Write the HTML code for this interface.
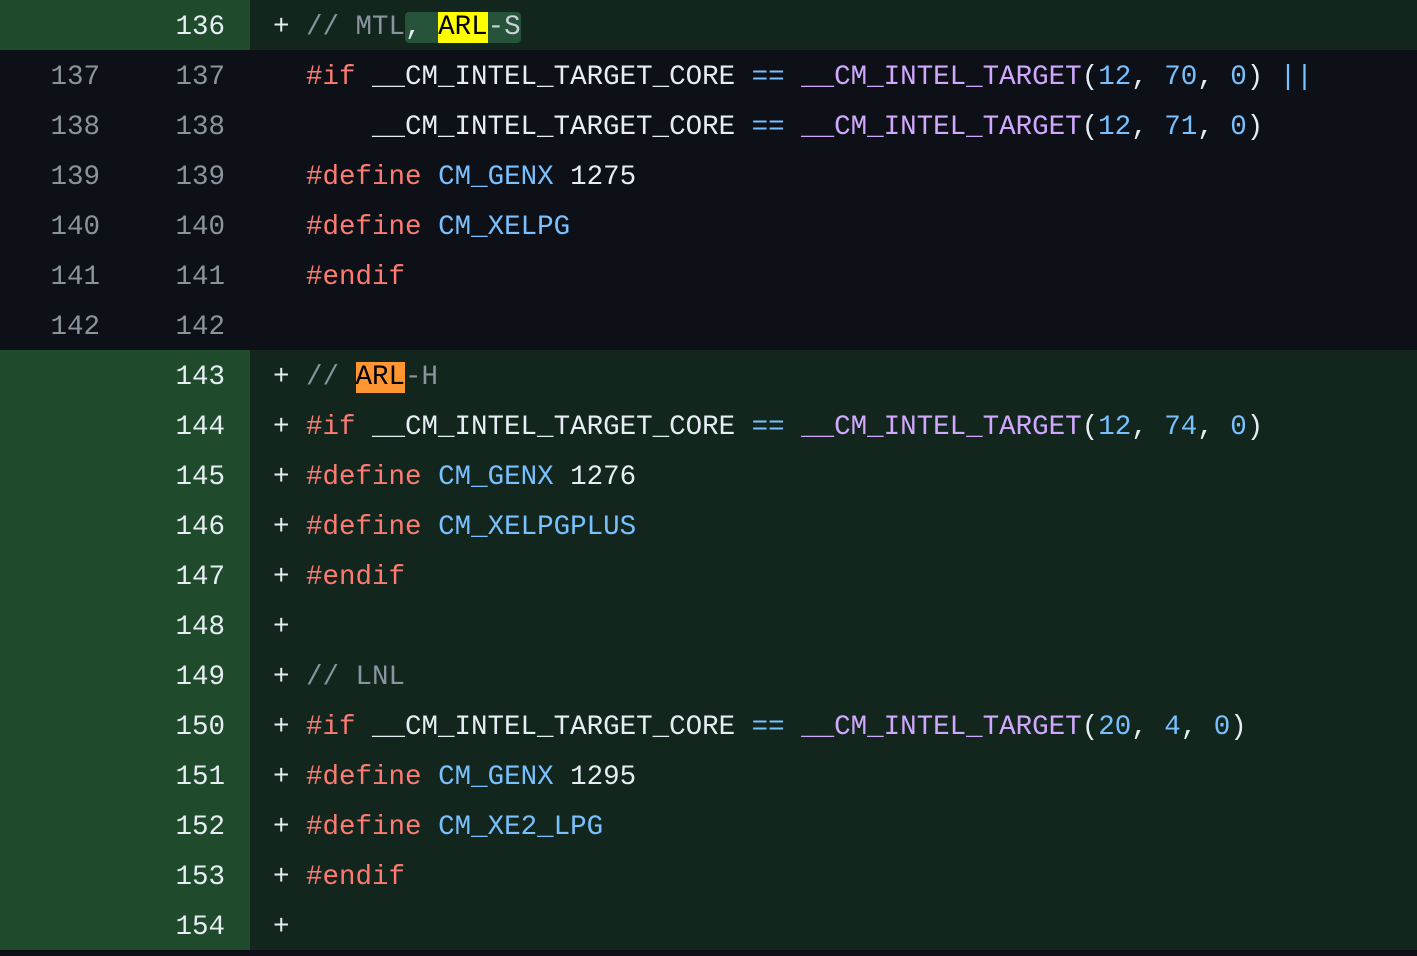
<!DOCTYPE html>
<html><head><style>
body{margin:0;width:1417px;height:949px;overflow:hidden;background:#0d1117;font-family:"Liberation Mono",monospace;font-size:27.5px;}
.r{height:50px;line-height:56px;position:relative;white-space:pre;}
.a{background:#12261e;}
.a .g{background:#1f4a2c;color:#e6edf3;}
.g{position:absolute;left:0;top:0;width:250px;height:50px;color:#8b949e;}
.n1{position:absolute;right:150px;}
.n2{position:absolute;right:25px;}
.c{position:absolute;left:273px;color:#e6edf3;}
.k{color:#ff7b72}.m{color:#8b949e}.b{color:#79c0ff}.p{color:#d2a8ff}
.hl{background:#26533a;border-radius:4px}
.y{background:#ffff00;color:#000}.o{background:#ff9632;color:#000}
</style></head><body>
<div class="r a"><div class="g"><span class="n2">136</span></div><span class="c">+ <span class="m">// MTL</span><span class="hl m"><span style="color:#e6edf3">, </span><span class="y">ARL</span><span style="color:#c9d1d9">-S</span></span></span></div>
<div class="r"><div class="g"><span class="n1">137</span><span class="n2">137</span></div><span class="c">  <span class="k">#if</span> __CM_INTEL_TARGET_CORE <span class="b">==</span> <span class="p">__CM_INTEL_TARGET</span>(<span class="b">12</span>, <span class="b">70</span>, <span class="b">0</span>) <span class="b">||</span></span></div>
<div class="r"><div class="g"><span class="n1">138</span><span class="n2">138</span></div><span class="c">      __CM_INTEL_TARGET_CORE <span class="b">==</span> <span class="p">__CM_INTEL_TARGET</span>(<span class="b">12</span>, <span class="b">71</span>, <span class="b">0</span>)</span></div>
<div class="r"><div class="g"><span class="n1">139</span><span class="n2">139</span></div><span class="c">  <span class="k">#define</span> <span class="b">CM_GENX</span> 1275</span></div>
<div class="r"><div class="g"><span class="n1">140</span><span class="n2">140</span></div><span class="c">  <span class="k">#define</span> <span class="b">CM_XELPG</span></span></div>
<div class="r"><div class="g"><span class="n1">141</span><span class="n2">141</span></div><span class="c">  <span class="k">#endif</span></span></div>
<div class="r"><div class="g"><span class="n1">142</span><span class="n2">142</span></div></div>
<div class="r a"><div class="g"><span class="n2">143</span></div><span class="c">+ <span class="m">// </span><span class="o">ARL</span><span class="m">-H</span></span></div>
<div class="r a"><div class="g"><span class="n2">144</span></div><span class="c">+ <span class="k">#if</span> __CM_INTEL_TARGET_CORE <span class="b">==</span> <span class="p">__CM_INTEL_TARGET</span>(<span class="b">12</span>, <span class="b">74</span>, <span class="b">0</span>)</span></div>
<div class="r a"><div class="g"><span class="n2">145</span></div><span class="c">+ <span class="k">#define</span> <span class="b">CM_GENX</span> 1276</span></div>
<div class="r a"><div class="g"><span class="n2">146</span></div><span class="c">+ <span class="k">#define</span> <span class="b">CM_XELPGPLUS</span></span></div>
<div class="r a"><div class="g"><span class="n2">147</span></div><span class="c">+ <span class="k">#endif</span></span></div>
<div class="r a"><div class="g"><span class="n2">148</span></div><span class="c">+</span></div>
<div class="r a"><div class="g"><span class="n2">149</span></div><span class="c">+ <span class="m">// LNL</span></span></div>
<div class="r a"><div class="g"><span class="n2">150</span></div><span class="c">+ <span class="k">#if</span> __CM_INTEL_TARGET_CORE <span class="b">==</span> <span class="p">__CM_INTEL_TARGET</span>(<span class="b">20</span>, <span class="b">4</span>, <span class="b">0</span>)</span></div>
<div class="r a"><div class="g"><span class="n2">151</span></div><span class="c">+ <span class="k">#define</span> <span class="b">CM_GENX</span> 1295</span></div>
<div class="r a"><div class="g"><span class="n2">152</span></div><span class="c">+ <span class="k">#define</span> <span class="b">CM_XE2_LPG</span></span></div>
<div class="r a"><div class="g"><span class="n2">153</span></div><span class="c">+ <span class="k">#endif</span></span></div>
<div class="r a"><div class="g"><span class="n2">154</span></div><span class="c">+</span></div>
</body></html>
